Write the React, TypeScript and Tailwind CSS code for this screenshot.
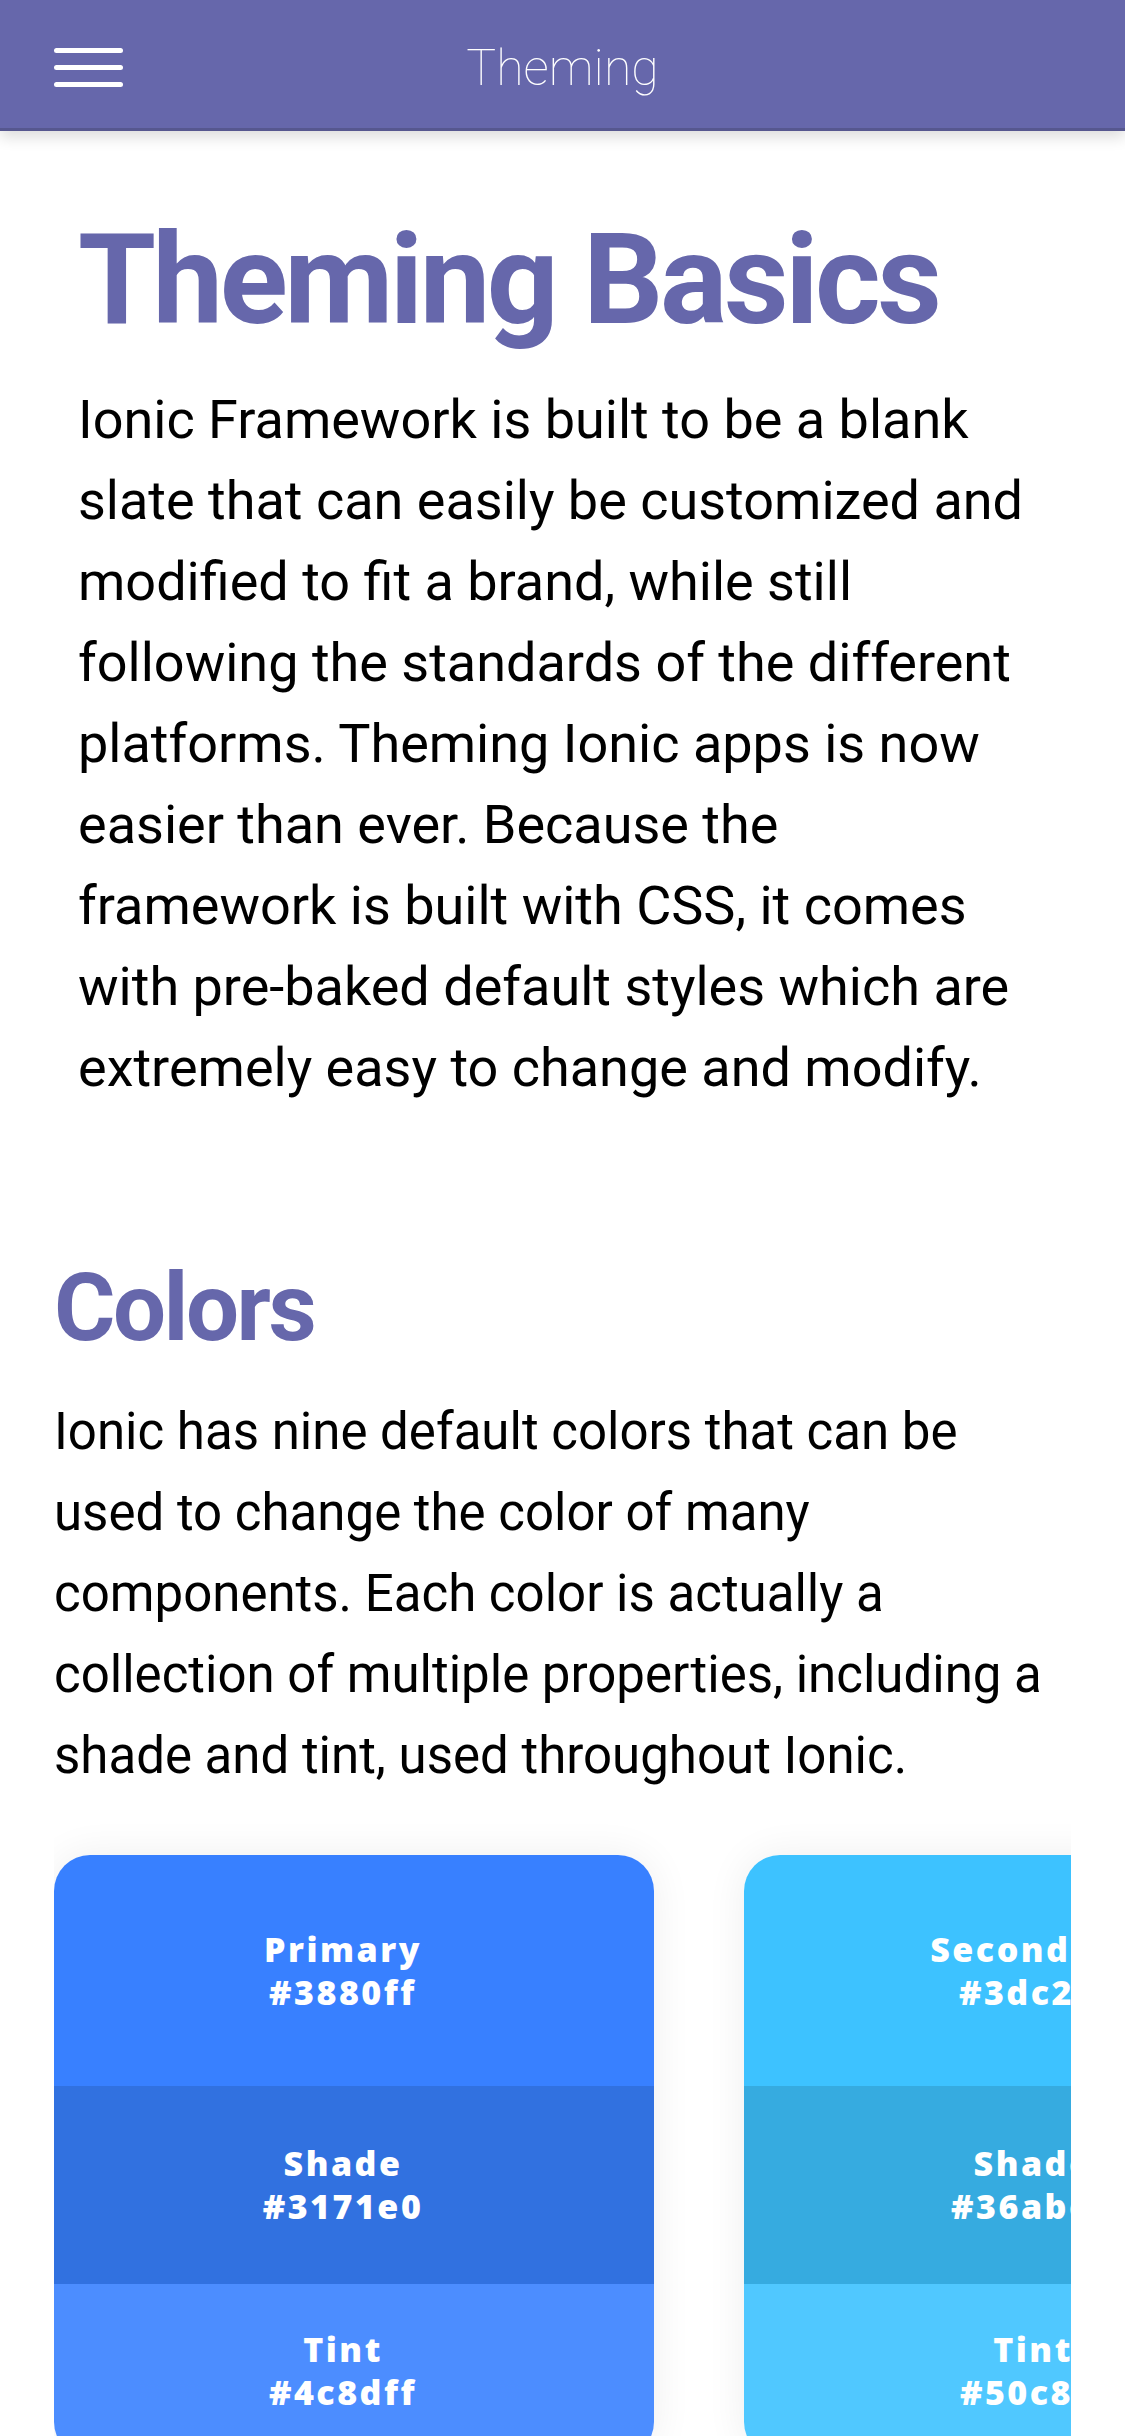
import React from 'react'

// Palette
const VIOLET = '#6667ab'

type Band = { label: string; hex: string; bg: string; h: string }
type Swatch = { id: string; bands: Band[] }

const swatches: Swatch[] = [
  {
    id: 'primary',
    bands: [
      { label: 'Primary', hex: '#3880ff', bg: 'bg-[#3880ff]', h: 'h-[231px]' },
      { label: 'Shade', hex: '#3171e0', bg: 'bg-[#3171e0]', h: 'h-[198px]' },
      { label: 'Tint', hex: '#4c8dff', bg: 'bg-[#4c8dff]', h: 'h-[174px]' },
    ],
  },
  {
    id: 'secondary',
    bands: [
      { label: 'Secondary', hex: '#3dc2ff', bg: 'bg-[#3dc2ff]', h: 'h-[231px]' },
      { label: 'Shade', hex: '#36abe0', bg: 'bg-[#36abe0]', h: 'h-[198px]' },
      { label: 'Tint', hex: '#50c8ff', bg: 'bg-[#50c8ff]', h: 'h-[174px]' },
    ],
  },
]

function MenuIcon() {
  return (
    <div className="flex flex-col gap-[12px]">
      <span className="block h-[5px] w-[69px] rounded-full bg-white" />
      <span className="block h-[5px] w-[69px] rounded-full bg-white" />
      <span className="block h-[5px] w-[69px] rounded-full bg-white" />
    </div>
  )
}

function SwatchCard({ s }: { s: Swatch }) {
  return (
    <div className="w-[600px] shrink-0 overflow-hidden rounded-[36px] shadow-[0_0_40px_rgba(0,0,0,0.07)]">
      {s.bands.map((b) => (
        <div key={b.label} className={`${b.bg} ${b.h} flex flex-col items-center justify-center pr-[22px]`}>
          <p className="font-['Open_Sans',sans-serif] text-[34px] font-extrabold leading-[43px] tracking-[2.5px] text-white">{b.label}</p>
          <p className="font-['Open_Sans',sans-serif] text-[34px] font-extrabold leading-[43px] tracking-[2.5px] text-white">{b.hex}</p>
        </div>
      ))}
    </div>
  )
}

export default function App() {
  return (
    <div className="min-h-[2436px] bg-white font-['Roboto',sans-serif] text-black">
      {/* ── Toolbar ── */}
      <header className="relative z-10 h-[131px] border-b-[3px] border-[#56578f] bg-[#6667ab] shadow-[0_6px_14px_rgba(0,0,0,0.14)]">
        <div className="grid h-full grid-cols-[1fr_auto_1fr] items-center pt-[7px]">
          <div className="pl-[54px]">
            <MenuIcon />
          </div>
          <h1 className="text-[50px] font-thin leading-none text-white">Theming</h1>
          <div />
        </div>
      </header>

      {/* ── Intro ── */}
      <section className="px-[78px] pt-[86px]">
        <h2 className="text-[126px] font-bold leading-[126px] tracking-[-3.5px]" style={{ color: VIOLET }}>
          Theming Basics
        </h2>
        <p className="mt-[36px] text-[54px] leading-[81px]">
          Ionic Framework is built to be a blank slate that can easily be customized and modified to fit a brand,
          while still following the standards of the different platforms. Theming Ionic apps is now easier than
          ever. Because the framework is built with CSS, it comes with pre-baked default styles which are
          extremely easy to change and modify.
        </p>
      </section>

      {/* ── Colors ── */}
      <section className="px-[54px] pt-[153px]">
        <h2 className="text-[94px] font-bold leading-[94px] tracking-[-2.5px]" style={{ color: VIOLET }}>
          Colors
        </h2>
        <p className="mt-[36px] text-[51px] leading-[81px]">
          Ionic has nine default colors that can be used to change the color of many components. Each color is
          actually a collection of multiple properties, including a shade and tint, used throughout Ionic.
        </p>
      </section>

      <div className="mx-[54px] mt-[15px] overflow-hidden pb-[60px] pt-[44px]">
        <div className="flex gap-[90px]">
          {swatches.map((s) => (
            <SwatchCard key={s.id} s={s} />
          ))}
        </div>
      </div>
    </div>
  )
}
